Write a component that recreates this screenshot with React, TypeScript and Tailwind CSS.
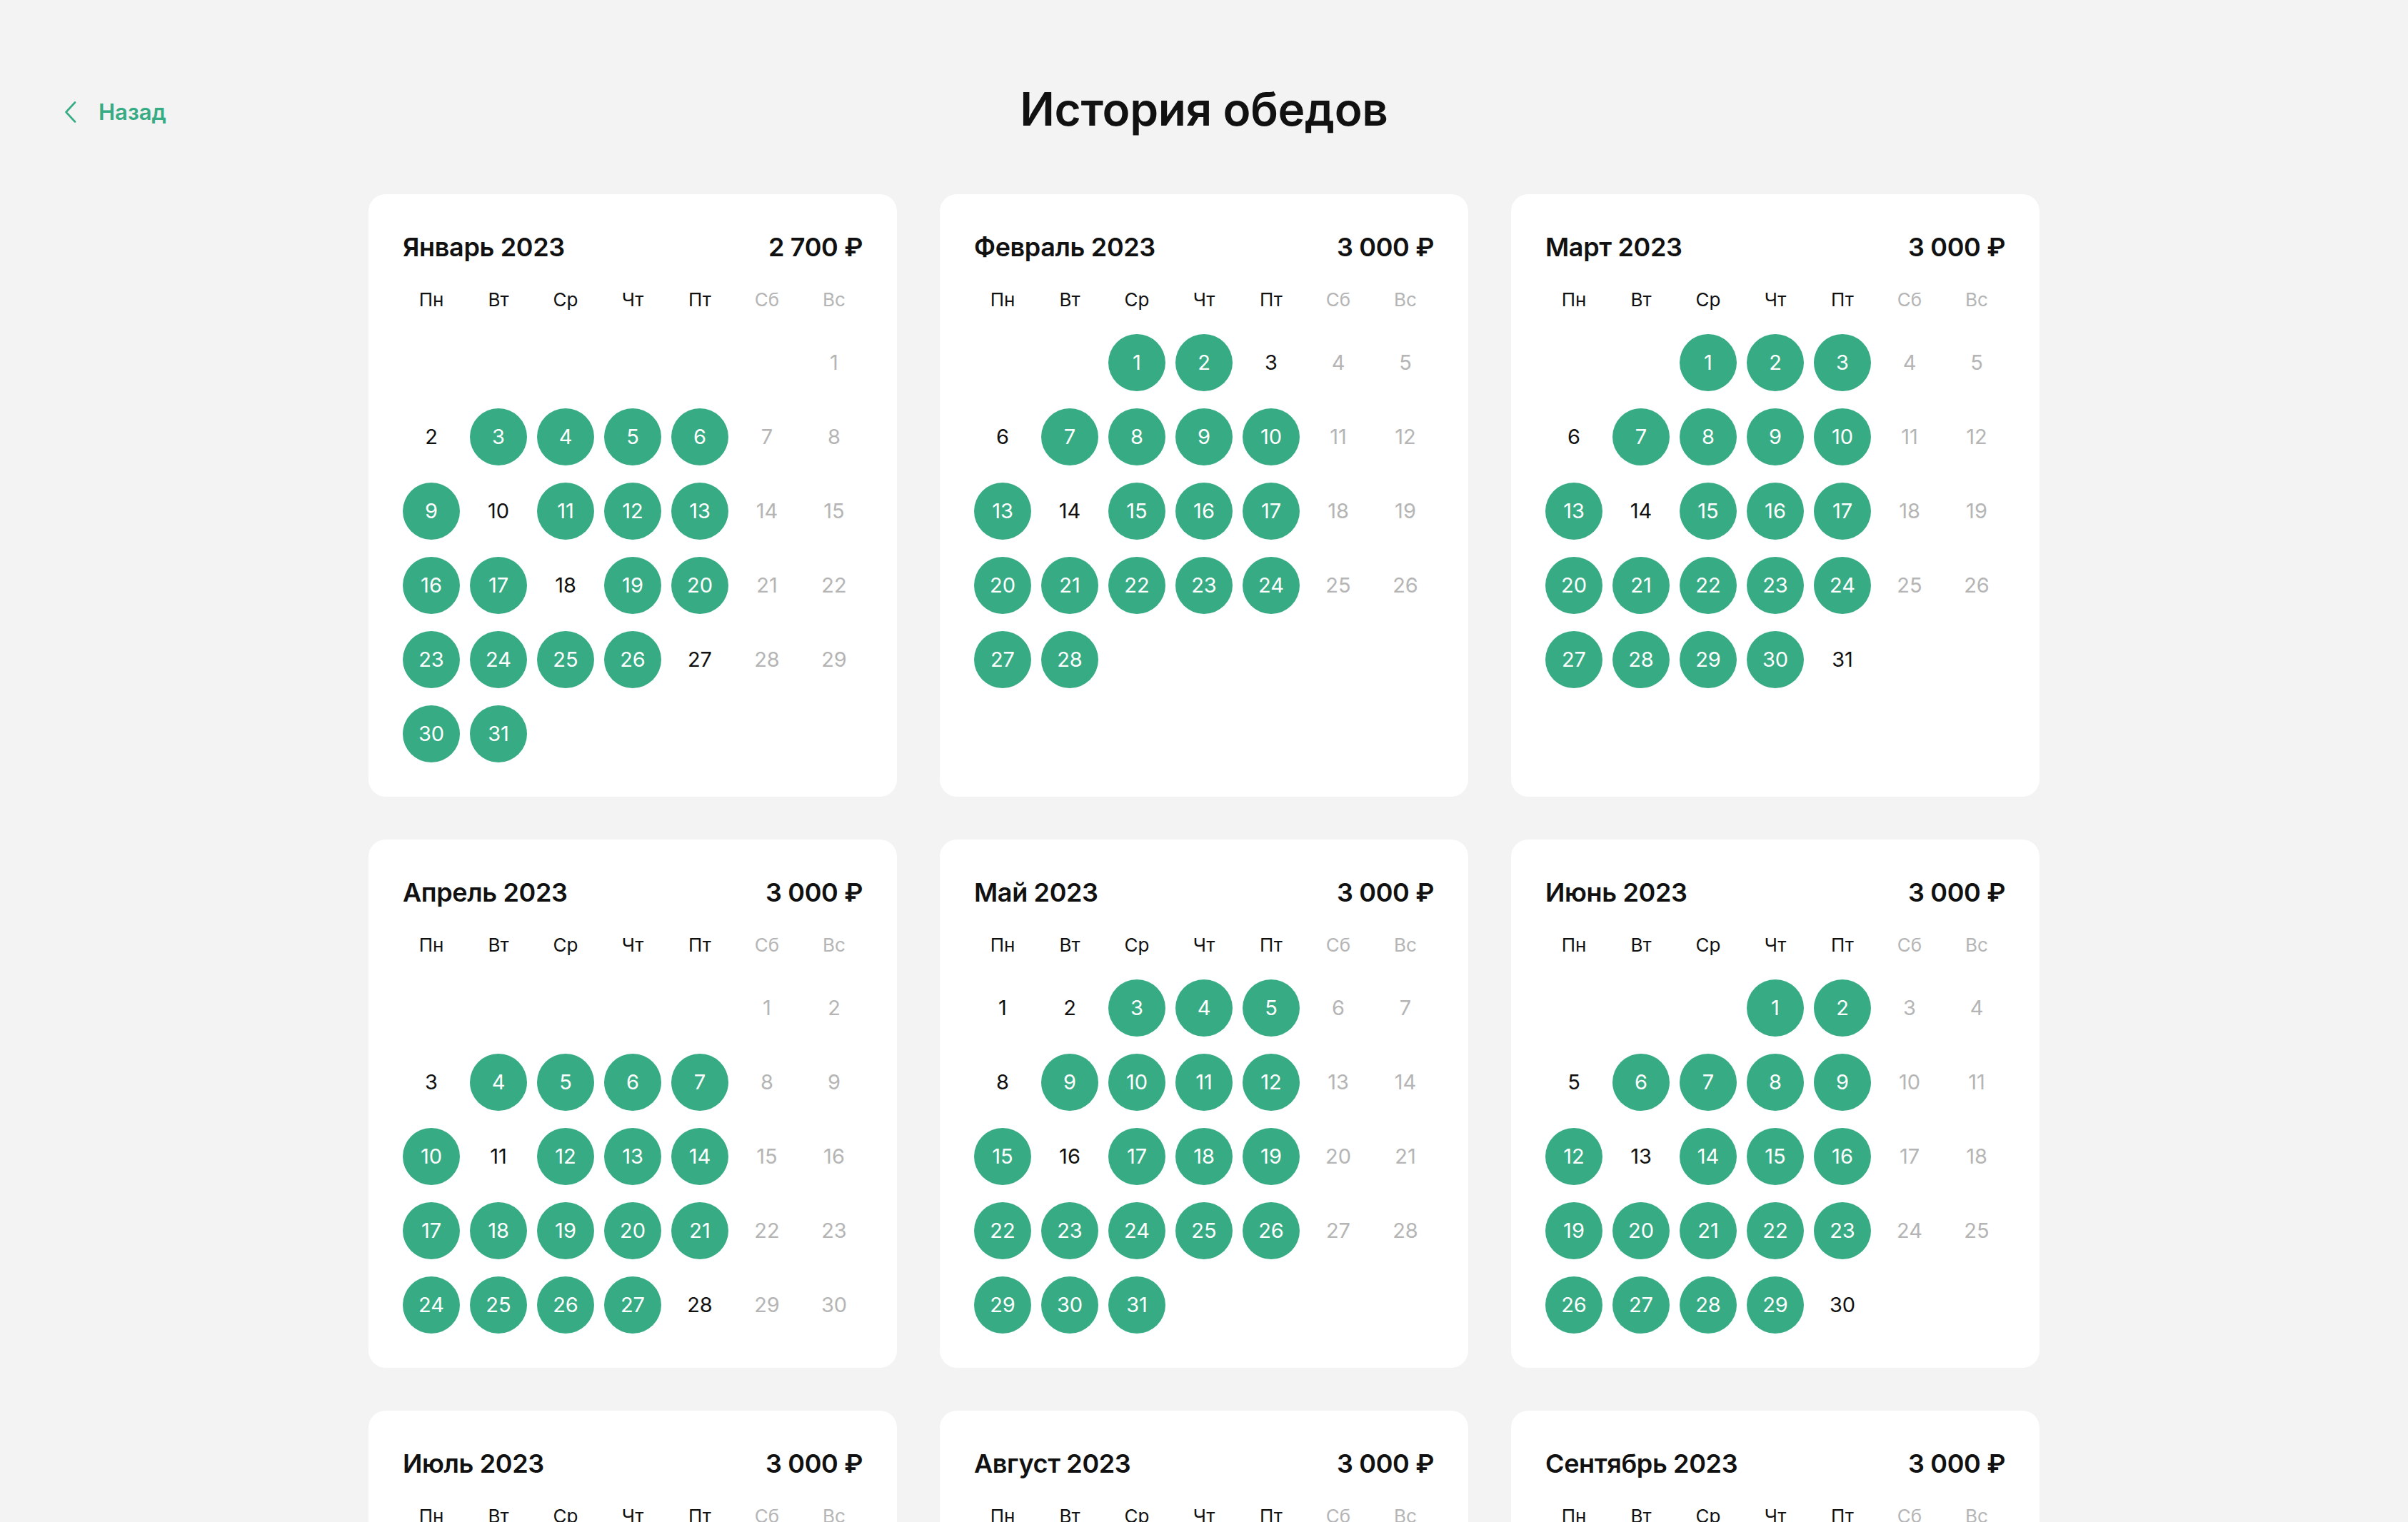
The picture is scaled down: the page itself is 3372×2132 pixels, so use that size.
import React from 'react';

type Month = {
    name: string;
    year: number;
    index: number; // 0-based month
    total: string;
    lunches: number[];
};

const MONTHS: Month[] = [
    { name: 'Январь', year: 2023, index: 0, total: '2 700 ₽', lunches: [3, 4, 5, 6, 9, 11, 12, 13, 16, 17, 19, 20, 23, 24, 25, 26, 30, 31] },
    { name: 'Февраль', year: 2023, index: 1, total: '3 000 ₽', lunches: [1, 2, 7, 8, 9, 10, 13, 15, 16, 17, 20, 21, 22, 23, 24, 27, 28] },
    { name: 'Март', year: 2023, index: 2, total: '3 000 ₽', lunches: [1, 2, 3, 7, 8, 9, 10, 13, 15, 16, 17, 20, 21, 22, 23, 24, 27, 28, 29, 30] },
    { name: 'Апрель', year: 2023, index: 3, total: '3 000 ₽', lunches: [4, 5, 6, 7, 10, 12, 13, 14, 17, 18, 19, 20, 21, 24, 25, 26, 27] },
    { name: 'Май', year: 2023, index: 4, total: '3 000 ₽', lunches: [3, 4, 5, 9, 10, 11, 12, 15, 17, 18, 19, 22, 23, 24, 25, 26, 29, 30, 31] },
    { name: 'Июнь', year: 2023, index: 5, total: '3 000 ₽', lunches: [1, 2, 6, 7, 8, 9, 12, 14, 15, 16, 19, 20, 21, 22, 23, 26, 27, 28, 29] },
    { name: 'Июль', year: 2023, index: 6, total: '3 000 ₽', lunches: [4, 5, 6, 7, 10, 11, 13, 14, 17, 18, 19, 20, 21, 24, 25, 26, 27, 31] },
    { name: 'Август', year: 2023, index: 7, total: '3 000 ₽', lunches: [1, 2, 3, 4, 7, 8, 10, 11, 14, 15, 16, 17, 18, 21, 22, 23, 24, 28, 29, 30] },
    { name: 'Сентябрь', year: 2023, index: 8, total: '3 000 ₽', lunches: [1, 4, 5, 6, 7, 8, 11, 13, 14, 15, 18, 19, 20, 21, 22, 25, 26, 27, 28] },
];

const WEEKDAYS = ['Пн', 'Вт', 'Ср', 'Чт', 'Пт', 'Сб', 'Вс'];

function buildCells(year: number, month: number) {
    const first = new Date(year, month, 1).getDay(); // 0 = Sunday
    const offset = (first + 6) % 7;
    const days = new Date(year, month + 1, 0).getDate();
    const cells: (number | null)[] = [];
    for (let i = 0; i < offset; i++) cells.push(null);
    for (let d = 1; d <= days; d++) cells.push(d);
    return cells;
}

function MonthCard({ m }: { m: Month }) {
    const cells = buildCells(m.year, m.index);

    return (
        <div className="bg-white rounded-[24px] p-[48px]">
            <div className="flex items-center justify-between h-[52px] text-[36px] leading-[52px] font-semibold text-[#111111] tracking-[-0.01em]">
                <span>{m.name} {m.year}</span>
                <span>{m.total}</span>
            </div>

            {/* Weekday header */}
            <div className="grid grid-cols-[repeat(7,80px)] gap-x-[14px] mt-[30px] h-[36px] text-[26px] leading-[36px]">
                {WEEKDAYS.map((w, i) => (
                    <div key={w} className={`text-center ${i > 4 ? 'text-[#b5b5b5]' : 'text-[#111111]'}`}>
                        {w}
                    </div>
                ))}
            </div>

            {/* Days */}
            <div className="grid grid-cols-[repeat(7,80px)] gap-x-[14px] gap-y-[24px] mt-[30px]">
                {cells.map((d, i) => {
                    if (d === null) return <div key={`e${i}`} className="h-[80px]" />;
                    const col = i % 7;
                    const weekend = col > 4;
                    const lunch = m.lunches.includes(d);
                    return (
                        <div key={d} className="h-[80px] flex items-center justify-center">
                            {lunch ? (
                                <div className="w-[80px] h-[80px] rounded-full bg-[#37ac84] text-white flex items-center justify-center text-[29px]">
                                    {d}
                                </div>
                            ) : (
                                <span className={`text-[29px] ${weekend ? 'text-[#b5b5b5]' : 'text-[#111111]'}`}>{d}</span>
                            )}
                        </div>
                    );
                })}
            </div>
        </div>
    );
}

export default function App() {
    return (
        <div className="min-h-screen bg-[#f3f3f3] font-[Inter,'Noto_Sans',sans-serif] pb-[120px]">
            <div className="grid grid-cols-[1fr_auto_1fr] px-[90px]">
                <a href="#" className="flex items-center gap-[30px] mt-[140px] h-[34px] text-[#37ac84] text-[31px] font-semibold leading-[34px] justify-self-start">
                    <svg width="18" height="30" viewBox="0 0 18 30" fill="none">
                        <path d="M15 1.5 L2.5 15 L15 28.5" stroke="#37ac84" strokeWidth="2.6" strokeLinecap="round" strokeLinejoin="round" />
                    </svg>
                    Назад
                </a>
                <h1 className="mt-[121px] text-[64px] leading-[64px] font-semibold text-[#111111] tracking-[-0.005em]">
                    История обедов
                </h1>
                <div />
            </div>

            <div className="grid grid-cols-[repeat(3,740px)] gap-[60px] justify-center mt-[87px]">
                {MONTHS.map((m) => (
                    <MonthCard key={m.name} m={m} />
                ))}
            </div>
        </div>
    );
}
